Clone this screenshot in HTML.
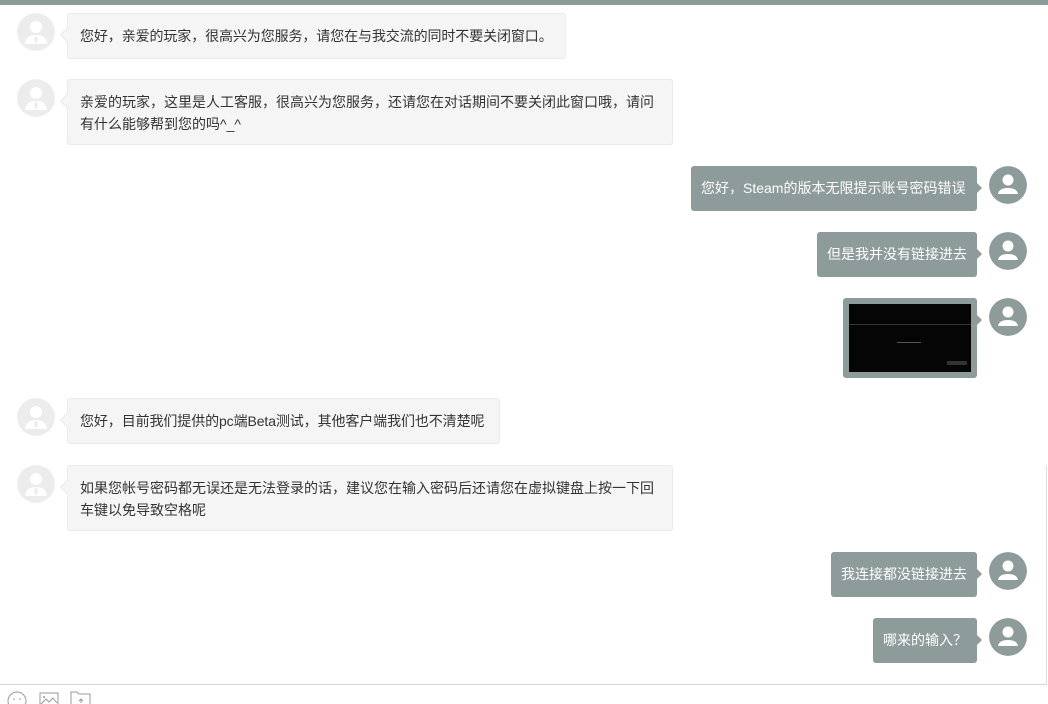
<!DOCTYPE html>
<html><head><meta charset="utf-8"><style>
body{margin:0;width:1048px;height:704px;overflow:hidden;background:#fff;position:relative;font-family:"Liberation Sans","Noto Sans CJK SC",sans-serif;}
.top{position:absolute;left:0;top:0;width:1048px;height:5px;background:#8d9b9a}
.av{position:absolute;width:38px;height:38px;border-radius:50%;overflow:hidden}
.av svg{display:block}
.l{position:absolute;left:67px;background:#f5f5f5;border:1px solid #ebebeb;border-radius:3px;color:#333;font-size:14px;line-height:22px;padding:11px 12px;box-sizing:border-box}
.l.n{white-space:nowrap;letter-spacing:-0.1px}
.l:before{content:"";position:absolute;left:-6px;top:16px;width:9px;height:9px;background:#f5f5f5;border-left:1px solid #ebebeb;border-bottom:1px solid #ebebeb;transform:rotate(45deg)}
.r{position:absolute;right:71px;background:#8d9b9a;border-radius:3px;color:#fff;font-size:14px;line-height:22px;padding:11px 10px;box-sizing:border-box;white-space:nowrap}
.r:after{content:"";position:absolute;right:-5px;top:17px;width:0;height:0;border-top:5px solid transparent;border-bottom:5px solid transparent;border-left:5px solid #8d9b9a}
</style></head><body>
<div class="top"></div>

<div class="av" style="left:17px;top:13px"><svg width="38" height="38"><circle cx="19" cy="19" r="19" fill="#ececec"/><circle cx="19" cy="14" r="6" fill="#fff"/><path d="M8 31 Q9 22 19 22 Q29 22 30 31 Z" fill="#fff"/><path d="M19 22 L17 26 L19 31 L21 26 Z" fill="#ececec"/></svg></div>
<div class="l n" style="top:13px;width:499px;height:46px">您好，亲爱的玩家，很高兴为您服务，请您在与我交流的同时不要关闭窗口。</div>

<div class="av" style="left:17px;top:79px"><svg width="38" height="38"><circle cx="19" cy="19" r="19" fill="#ececec"/><circle cx="19" cy="14" r="6" fill="#fff"/><path d="M8 31 Q9 22 19 22 Q29 22 30 31 Z" fill="#fff"/><path d="M19 22 L17 26 L19 31 L21 26 Z" fill="#ececec"/></svg></div>
<div class="l" style="top:79px;width:606px;height:66px">亲爱的玩家，这里是人工客服，很高兴为您服务，还请您在对话期间不要关闭此窗口哦，请问有什么能够帮到您的吗^_^</div>

<div class="r" style="top:166px;height:45px;width:286px">您好，Steam的版本无限提示账号密码错误</div>
<div class="av" style="left:989px;top:166px"><svg width="38" height="38"><circle cx="19" cy="19" r="19" fill="#8d9b9a"/><circle cx="19" cy="14" r="5.5" fill="#fff"/><path d="M9 28 Q10 22 19 22 Q28 22 29 28 Z" fill="#fff"/></svg></div>

<div class="r" style="top:232px;height:45px">但是我并没有链接进去</div>
<div class="av" style="left:989px;top:232px"><svg width="38" height="38"><circle cx="19" cy="19" r="19" fill="#8d9b9a"/><circle cx="19" cy="14" r="5.5" fill="#fff"/><path d="M9 28 Q10 22 19 22 Q28 22 29 28 Z" fill="#fff"/></svg></div>

<div class="r" style="top:298px;width:134px;height:80px;padding:6px">
<div style="width:122px;height:68px;background:#050505;position:relative">
<div style="position:absolute;left:0;top:20px;width:122px;height:1px;background:#333"></div>
<div style="position:absolute;left:48px;top:38px;width:24px;height:1px;background:#555"></div>
<div style="position:absolute;right:4px;top:57px;width:20px;height:4px;background:#333"></div>
</div></div>
<div class="av" style="left:989px;top:298px"><svg width="38" height="38"><circle cx="19" cy="19" r="19" fill="#8d9b9a"/><circle cx="19" cy="14" r="5.5" fill="#fff"/><path d="M9 28 Q10 22 19 22 Q28 22 29 28 Z" fill="#fff"/></svg></div>

<div class="av" style="left:17px;top:398px"><svg width="38" height="38"><circle cx="19" cy="19" r="19" fill="#ececec"/><circle cx="19" cy="14" r="6" fill="#fff"/><path d="M8 31 Q9 22 19 22 Q29 22 30 31 Z" fill="#fff"/><path d="M19 22 L17 26 L19 31 L21 26 Z" fill="#ececec"/></svg></div>
<div class="l n" style="top:398px;width:433px;height:46px">您好，目前我们提供的pc端Beta测试，其他客户端我们也不清楚呢</div>

<div class="av" style="left:17px;top:465px"><svg width="38" height="38"><circle cx="19" cy="19" r="19" fill="#ececec"/><circle cx="19" cy="14" r="6" fill="#fff"/><path d="M8 31 Q9 22 19 22 Q29 22 30 31 Z" fill="#fff"/><path d="M19 22 L17 26 L19 31 L21 26 Z" fill="#ececec"/></svg></div>
<div class="l" style="top:465px;width:606px;height:66px">如果您帐号密码都无误还是无法登录的话，建议您在输入密码后还请您在虚拟键盘上按一下回车键以免导致空格呢</div>

<div class="r" style="top:552px;height:45px">我连接都没链接进去</div>
<div class="av" style="left:989px;top:552px"><svg width="38" height="38"><circle cx="19" cy="19" r="19" fill="#8d9b9a"/><circle cx="19" cy="14" r="5.5" fill="#fff"/><path d="M9 28 Q10 22 19 22 Q28 22 29 28 Z" fill="#fff"/></svg></div>

<div class="r" style="top:618px;height:45px">哪来的输入？</div>
<div class="av" style="left:989px;top:618px"><svg width="38" height="38"><circle cx="19" cy="19" r="19" fill="#8d9b9a"/><circle cx="19" cy="14" r="5.5" fill="#fff"/><path d="M9 28 Q10 22 19 22 Q28 22 29 28 Z" fill="#fff"/></svg></div>

<div style="position:absolute;left:1046px;top:465px;width:1px;height:220px;background:#ddd"></div>
<div style="position:absolute;left:0;top:684px;width:1047px;height:1px;background:#d6d6d6"></div>
<svg style="position:absolute;left:0;top:688px" width="100" height="16">
<circle cx="17" cy="13" r="9" fill="none" stroke="#999" stroke-width="1"/>
<circle cx="14" cy="11" r="0.8" fill="#999"/><circle cx="20" cy="11" r="0.8" fill="#999"/>
<rect x="40" y="5" width="18" height="14" fill="none" stroke="#999" stroke-width="1"/>
<circle cx="44" cy="9" r="1" fill="#999"/>
<path d="M41 16 L46 11 L49 14 L53 10 L57 15" fill="none" stroke="#999" stroke-width="1"/>
<path d="M71 17 V4 H77 L79 6 H90 V17" fill="none" stroke="#999" stroke-width="1"/>
<path d="M81 15 V11 M79 13 L81 11 L83 13" fill="none" stroke="#999" stroke-width="1"/>
</svg>
</body></html>
